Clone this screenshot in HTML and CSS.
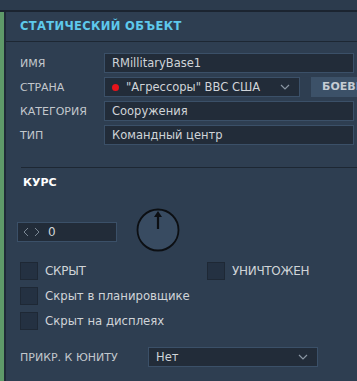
FILE: index.html
```html
<!DOCTYPE html>
<html lang="ru">

<head>
  <meta charset="UTF-8">
  <meta name="viewport" content="width=device-width, initial-scale=1.0">
  <title>Статический объект</title>
  <link rel="stylesheet" href="styles.css">
</head>

<body>
  <!-- верхняя полоса -->
  <div class="topbar"></div>

  <div class="main">
    <div class="strip"></div>

    <div class="panel">
      <div class="title">СТАТИЧЕСКИЙ ОБЪЕКТ</div>

      <!-- основные поля -->
      <div class="form">
        <div class="row">
          <label>ИМЯ</label>
          <div class="field wide">RMillitaryBase1</div>
        </div>
        <div class="row">
          <label>СТРАНА</label>
          <div class="field select country">
            <span class="dot"></span>
            <span class="value">"Агрессоры" ВВС США</span>
            <svg class="chevron" width="10" height="6" viewBox="0 0 10 6"><polyline points="1,1 5,5 9,1" /></svg>
          </div>
          <div class="btn">БОЕВЫЕ</div>
        </div>
        <div class="row">
          <label>КАТЕГОРИЯ</label>
          <div class="field wide">Сооружения</div>
        </div>
        <div class="row">
          <label>ТИП</label>
          <div class="field wide">Командный центр</div>
        </div>
      </div>

      <div class="separator"></div>

      <!-- курс -->
      <div class="section-title">КУРС</div>
      <div class="course">
        <div class="spin">
          <svg class="arrows" width="18" height="10" viewBox="0 0 18 10">
            <polyline points="5,1 1,5 5,9" />
            <polyline points="12,1 16,5 12,9" />
          </svg>
          <span>0</span>
        </div>
        <svg class="dial" width="44" height="44" viewBox="0 0 44 44">
          <circle cx="22" cy="22" r="20.5" />
          <line x1="22" y1="21" x2="22" y2="8" />
          <polygon points="22,3 18,9 26,9" />
        </svg>
      </div>

      <!-- флажки -->
      <div class="checks">
        <div class="check"><span class="box"></span><span class="caps">СКРЫТ</span></div>
        <div class="check"><span class="box"></span><span class="caps">УНИЧТОЖЕН</span></div>
        <div class="check full"><span class="box"></span>Скрыт в планировщике</div>
        <div class="check full"><span class="box"></span>Скрыт на дисплеях</div>
      </div>

      <div class="row attach">
        <label>ПРИКР. К ЮНИТУ</label>
        <div class="field select unit">
          <span class="value">Нет</span>
          <svg class="chevron" width="10" height="6" viewBox="0 0 10 6"><polyline points="1,1 5,5 9,1" /></svg>
        </div>
      </div>
    </div>
  </div>
</body>

</html>
```

FILE: styles.css
```css
/* общий вид */
body {
  margin: 0;
  width: 357px;
  height: 381px;
  overflow: hidden;
  background-color: #2e3e51;
  font-family: "DejaVu Sans", Verdana, sans-serif;
  color: #c9cdd2;
}

.topbar {
  height: 10px;
  background-color: #2c3b4d;
  border-bottom: 2px solid #1b2430;
}

.main {
  display: flex;
  height: 369px;
}

.strip {
  width: 4px;
  background-color: #5f9a69;
  border-right: 2px solid #1f2a37;
  flex-shrink: 0;
}

.panel {
  flex: 1;
  min-width: 0;
  overflow: hidden;
}

/* заголовок */
.title {
  height: 29px;
  line-height: 29px;
  padding-left: 14px;
  font-size: 11.5px;
  font-weight: bold;
  letter-spacing: 0.35px;
  color: #5ec9ec;
  border-bottom: 1px solid #1d2733;
}

/* поля */
.form {
  padding: 11px 0 0 14px;
  display: flex;
  flex-direction: column;
  gap: 4px;
}

.row {
  display: flex;
  align-items: center;
  height: 20px;
}

.row label {
  width: 84px;
  flex-shrink: 0;
  font-size: 11px;
  color: #c3c8cd;
}

.field {
  box-sizing: border-box;
  flex-shrink: 0;
  height: 20px;
  line-height: 18px;
  padding: 0 7px;
  font-size: 11.5px;
  color: #d0d4d8;
  background-color: #222c39;
  border: 1px solid #3b5068;
  white-space: nowrap;
}

.field.wide {
  width: 250px;
}

.select {
  display: flex;
  align-items: center;
}

.select .value {
  flex: 1;
}

.chevron {
  fill: none;
  stroke: #8a96a3;
  stroke-width: 1.2;
  margin-right: 2px;
}

.country {
  width: 196px;
}

.dot {
  width: 7px;
  height: 7px;
  border-radius: 50%;
  background-color: #e8141b;
  margin-right: 7px;
}

.btn {
  flex-shrink: 0;
  margin-left: 11px;
  height: 20px;
  line-height: 20px;
  padding: 0 11px;
  font-size: 11px;
  font-weight: bold;
  color: #c5ccd3;
  background-color: #3c5168;
  white-space: nowrap;
}

/* разделитель */
.separator {
  margin: 22px 0 0 15px;
  border-top: 1px solid #1d2733;
}

.section-title {
  margin: 8px 0 0 17px;
  font-size: 11px;
  font-weight: bold;
  color: #ffffff;
}

/* курс */
.course {
  display: flex;
  align-items: center;
  margin: 19px 0 0 11px;
}

.spin {
  box-sizing: border-box;
  width: 100px;
  height: 20px;
  display: flex;
  align-items: center;
  padding-left: 5px;
  font-size: 12px;
  color: #d0d4d8;
  background-color: #222c39;
  border: 1px solid #3b5068;
  margin-top: 4px;
}

.arrows {
  fill: none;
  stroke: #7b8794;
  stroke-width: 1;
  margin-right: 7px;
}

.dial {
  margin-left: 19px;
}

.dial circle {
  fill: #384b61;
  stroke: #0c0f13;
  stroke-width: 1.8;
}

.dial line {
  stroke: #0c0f13;
  stroke-width: 2.2;
}

.dial polygon {
  fill: #0c0f13;
}

/* флажки */
.checks {
  display: grid;
  grid-template-columns: 187px 1fr;
  row-gap: 7px;
  margin: 10px 0 0 14px;
}

.check {
  display: flex;
  align-items: center;
  height: 18px;
  font-size: 11.7px;
  color: #d0d4d8;
}

.check.full {
  grid-column: 1 / 3;
}

.box {
  box-sizing: border-box;
  width: 18px;
  height: 18px;
  margin-right: 7px;
  background-color: #243142;
  border: 1px solid #1e2835;
}

.caps {
  font-size: 12px;
  letter-spacing: -0.3px;
}

/* прикрепление */
.attach {
  margin: 17px 0 0 14px;
}

.attach label {
  width: 128px;
}

.unit {
  width: 170px;
}
```
